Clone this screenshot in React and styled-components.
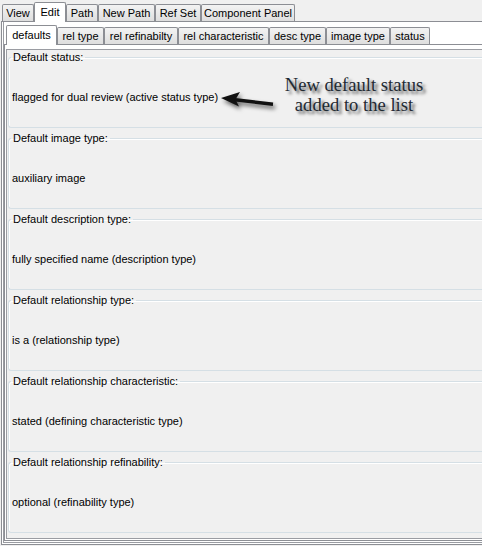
import React from "react";
import styled, { createGlobalStyle } from "styled-components";

const GlobalStyle = createGlobalStyle`
  html, body {
    margin: 0;
    padding: 0;
    background: #f0f0f0;
    overflow: hidden;
  }
  body {
    font-family: "Liberation Sans", Arial, sans-serif;
    font-size: 11px;
    color: #000;
  }
`;

const Frame = styled.div`
  width: 500px;
  background: #f0f0f0;
`;

const TabRow = styled.div`
  display: flex;
  align-items: flex-end;
  height: ${(p) => p.$h}px;
  padding-left: ${(p) => p.$pad}px;
`;

const Tab = styled.div`
  box-sizing: border-box;
  width: ${(p) => p.$w}px;
  height: ${(p) => (p.$active ? p.$h + 3 : p.$h)}px;
  margin-bottom: ${(p) => (p.$active ? -1 : 0)}px;
  border: 1px solid #8c8e94;
  border-bottom: none;
  border-radius: 2px 2px 0 0;
  background: ${(p) =>
    p.$active ? "#ffffff" : "linear-gradient(#f3f3f3, #dedede)"};
  text-align: center;
  line-height: ${(p) => (p.$active ? p.$h + 1 : p.$h - 1)}px;
  white-space: nowrap;
  overflow: hidden;
  position: relative;
  z-index: ${(p) => (p.$active ? 2 : 1)};
`;

const OuterPanel = styled.div`
  margin-left: 1px;
  border: 1px solid #8c8e94;
  border-right: none;
  padding: 0 0 1px 1px;
  background: #ffffff;
`;

const OuterInner = styled.div`
  border-left: 1px solid #9a9ca2;
  border-bottom: 1px solid #9a9ca2;
  padding: 0 0 1px 0;
`;

const InnerPanel = styled.div`
  border: 1px solid #8c8e94;
  border-right: none;
  padding: 4px 0 1px 1px;
  background: #ffffff;
  position: relative;
  z-index: 1;
`;

const InnerBox = styled.div`
  border: 1px solid #9a9ca2;
  border-right: none;
  background: #f0f0f0;
  padding: 1px 0 5px 1px;
  display: flex;
  flex-direction: column;
  gap: 4px;
`;

const Section = styled.fieldset`
  position: relative;
  box-sizing: border-box;
  height: 77px;
  margin: 0;
  padding: 0 2px;
  border: 1px solid #d5dfe5;
  border-right: none;
  border-radius: 3px 0 0 3px;
  box-shadow: inset 1px 1px 0 #ffffff;
  min-width: 0;
`;

const Legend = styled.legend`
  padding: 0 2px;
  line-height: 13px;
  font-size: 11px;
`;

const Value = styled.div`
  margin-top: 27px;
  padding-left: 1px;
  line-height: 13px;
`;

const Note = styled.div`
  position: absolute;
  left: 263px;
  top: 11px;
  width: 164px;
  text-align: center;
  font-family: "Liberation Serif", "Times New Roman", serif;
  font-size: 18.6px;
  line-height: 20px;
  color: #1f2a33;
  text-shadow: 3px 3px 3px rgba(0, 0, 0, 0.6);
`;

const Arrow = styled.svg`
  position: absolute;
  left: 201px;
  top: 25px;
  overflow: visible;
  filter: drop-shadow(2px 3px 2px rgba(0, 0, 0, 0.6));
`;

const outerTabs = [
  { label: "View", w: 32 },
  { label: "Edit", w: 32, active: true },
  { label: "Path", w: 32 },
  { label: "New Path", w: 57 },
  { label: "Ref Set", w: 46 },
  { label: "Component Panel", w: 94 },
];

const innerTabs = [
  { label: "defaults", w: 51, active: true },
  { label: "rel type", w: 47 },
  { label: "rel refinabilty", w: 74 },
  { label: "rel characteristic", w: 91 },
  { label: "desc type", w: 57 },
  { label: "image type", w: 64 },
  { label: "status", w: 40 },
];

const sections = [
  { title: "Default status:", value: "flagged for dual review (active status type)", note: true },
  { title: "Default image type:", value: "auxiliary image" },
  { title: "Default description type:", value: "fully specified name (description type)" },
  { title: "Default relationship type:", value: "is a (relationship type)" },
  { title: "Default relationship characteristic:", value: "stated (defining characteristic type)" },
  { title: "Default relationship refinability:", value: "optional (refinability type)" },
];

const App = () => {
  return (
    <Frame>
      <GlobalStyle />
      <TabRow $h={21} $pad={2}>
        {outerTabs.map((t) => (
          <Tab key={t.label} $w={t.w} $h={17} $active={t.active}>
            {t.label}
          </Tab>
        ))}
      </TabRow>
      <OuterPanel>
        <OuterInner>
          <TabRow $h={22} $pad={2}>
            {innerTabs.map((t) => (
              <Tab key={t.label} $w={t.w} $h={17} $active={t.active}>
                {t.label}
              </Tab>
            ))}
          </TabRow>
          <InnerPanel>
            <InnerBox>
              {sections.map((s) => (
                <Section key={s.title}>
                  <Legend>{s.title}</Legend>
                  <Value>{s.value}</Value>
                  {s.note && (
                    <>
                      <Arrow width="64" height="20" viewBox="0 0 64 20">
                        <path d="M11 9 L30 3 L25.5 10.6 L29 17.5 Z" fill="#111" />
                        <path d="M25 10.8 L63 15.2" stroke="#111" strokeWidth="3.5" />
                      </Arrow>
                      <Note>
                        New default status
                        <br />
                        added to the list
                      </Note>
                    </>
                  )}
                </Section>
              ))}
            </InnerBox>
          </InnerPanel>
        </OuterInner>
      </OuterPanel>
    </Frame>
  );
};

export default App;
